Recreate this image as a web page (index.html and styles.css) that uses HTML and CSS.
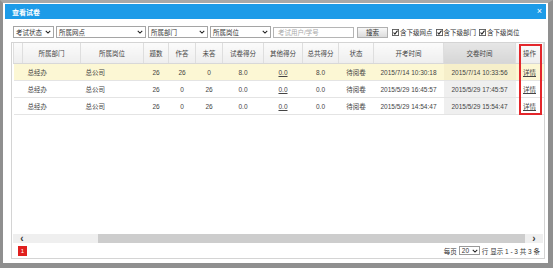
FILE: index.html
```html
<!DOCTYPE html>
<html lang="zh-CN">
<head>
    <meta charset="UTF-8">
    <title>查看试卷</title>
    <link rel="stylesheet" href="styles.css">
</head>
<body>

<div class="dialog">
    <div class="title-bar">
        <span class="title">查看试卷</span>
        <span class="close">&#215;</span>
    </div>

    <div class="content">
        <!-- filters -->
        <div class="filters">
            <div class="sel w1">考试状态<svg class="chev" viewBox="0 0 8 5"><path d="M1 1 L4 4 L7 1" /></svg></div>
            <div class="sel w2">所属网点<svg class="chev" viewBox="0 0 8 5"><path d="M1 1 L4 4 L7 1" /></svg></div>
            <div class="sel w3">所属部门<svg class="chev" viewBox="0 0 8 5"><path d="M1 1 L4 4 L7 1" /></svg></div>
            <div class="sel w4">所属岗位<svg class="chev" viewBox="0 0 8 5"><path d="M1 1 L4 4 L7 1" /></svg></div>
            <div class="search-input">考试用户/学号</div>
            <div class="search-btn">搜索</div>
            <label class="chk"><svg class="box" viewBox="0 0 8 8"><rect x="0.5" y="0.5" width="7" height="7" /><path d="M1.8 4 L3.3 5.8 L6.3 1.8" /></svg>含下级网点</label>
            <label class="chk"><svg class="box" viewBox="0 0 8 8"><rect x="0.5" y="0.5" width="7" height="7" /><path d="M1.8 4 L3.3 5.8 L6.3 1.8" /></svg>含下级部门</label>
            <label class="chk"><svg class="box" viewBox="0 0 8 8"><rect x="0.5" y="0.5" width="7" height="7" /><path d="M1.8 4 L3.3 5.8 L6.3 1.8" /></svg>含下级岗位</label>
        </div>

        <!-- grid -->
        <div class="grid">
            <div class="grid-body">
                <table>
                    <colgroup>
                        <col style="width:9px">
                        <col style="width:58px">
                        <col style="width:63px">
                        <col style="width:25px">
                        <col style="width:27px">
                        <col style="width:27px">
                        <col style="width:41px">
                        <col style="width:39px">
                        <col style="width:36px">
                        <col style="width:35px">
                        <col style="width:70px">
                        <col style="width:72px">
                        <col style="width:28px">
                    </colgroup>
                    <tr>
                        <th></th>
                        <th>所属部门</th>
                        <th>所属岗位</th>
                        <th>题数</th>
                        <th>作答</th>
                        <th>未答</th>
                        <th>试卷得分</th>
                        <th>其他得分</th>
                        <th>总共得分</th>
                        <th>状态</th>
                        <th>开考时间</th>
                        <th class="sorted">交卷时间</th>
                        <th>操作</th>
                    </tr>
                    <tr class="selected">
                        <td></td>
                        <td class="left">总经办</td>
                        <td class="left">总公司</td>
                        <td>26</td>
                        <td>26</td>
                        <td>0</td>
                        <td>8.0</td>
                        <td><u>0.0</u></td>
                        <td>8.0</td>
                        <td>待阅卷</td>
                        <td>2015/7/14 10:30:18</td>
                        <td class="sorted">2015/7/14 10:33:56</td>
                        <td><u>详情</u></td>
                    </tr>
                    <tr>
                        <td></td>
                        <td class="left">总经办</td>
                        <td class="left">总公司</td>
                        <td>26</td>
                        <td>0</td>
                        <td>26</td>
                        <td>0.0</td>
                        <td><u>0.0</u></td>
                        <td>0.0</td>
                        <td>待阅卷</td>
                        <td>2015/5/29 16:45:57</td>
                        <td class="sorted">2015/5/29 17:45:57</td>
                        <td><u>详情</u></td>
                    </tr>
                    <tr>
                        <td></td>
                        <td class="left">总经办</td>
                        <td class="left">总公司</td>
                        <td>26</td>
                        <td>0</td>
                        <td>26</td>
                        <td>0.0</td>
                        <td><u>0.0</u></td>
                        <td>0.0</td>
                        <td>待阅卷</td>
                        <td>2015/5/29 14:54:47</td>
                        <td class="sorted">2015/5/29 15:54:47</td>
                        <td><u>详情</u></td>
                    </tr>
                </table>
            </div>

            <div class="hscroll">
                <span class="arrow">&#8249;</span>
                <span class="thumb"></span>
                <span class="arrow">&#8250;</span>
            </div>

            <div class="pager">
                <span class="page-num">1</span>
                <span class="pager-info">每页 <span class="page-size">20<svg class="chev" viewBox="0 0 8 5"><path d="M1 1 L4 4 L7 1" /></svg></span> 行 显示 1 - 3 共 3 条</span>
            </div>

            <!-- highlight box around the action column -->
            <div class="mark"></div>
        </div>
    </div>
</div>

</body>
</html>
```

FILE: styles.css
```css
body {
    margin: 0;
    background-color: #fff;
    font-family: "Liberation Sans", "Noto Sans CJK SC", sans-serif;
    color: #444;
}
.dialog {
    width: 553px;
    height: 268px;
    box-sizing: border-box;
    border-style: solid;
    border-color: #8f8f8f;
    border-width: 3px 5px 5px 3px;
    border-top-color: #a8a8a8;
    padding: 1px 2px 0 2px;
    background-color: #fff;
}
.title-bar {
    height: 15px;
    background-color: #1d9be8;
    display: flex;
    align-items: center;
    justify-content: space-between;
    padding: 0 4px 0 7px;
    color: white;
}
.title {
    font-size: 7px;
    font-weight: bold;
}
.close {
    font-size: 9px;
    line-height: 9px;
}
.content {
    padding: 7px 1px 0 6px;
}
.filters {
    display: flex;
    align-items: center;
    height: 12px;
    padding-left: 2px;
    font-size: 6.5px;
}
.sel {
    height: 12px;
    box-sizing: border-box;
    border: 1px solid #a5a5a5;
    display: flex;
    align-items: center;
    justify-content: space-between;
    padding: 0 2px 0 2px;
    margin-right: 2px;
    color: #333;
}
.w1 { width: 41px; }
.w2 { width: 90px; }
.w3 { width: 60px; }
.w4 { width: 61px; }
.chev {
    width: 6px;
    height: 4px;
    fill: none;
    stroke: #222;
    stroke-width: 1.4;
}
.search-input {
    width: 81px;
    height: 11px;
    box-sizing: border-box;
    border: 1px solid #b5b5b5;
    color: #aaa;
    padding-left: 4px;
    line-height: 9px;
}
.search-btn {
    width: 31px;
    height: 11px;
    box-sizing: border-box;
    margin-left: 3px;
    border: 1px solid #b0b0b0;
    background: linear-gradient(#f8f8f8, #dcdcdc);
    text-align: center;
    line-height: 9px;
    color: #333;
}
.chk {
    display: flex;
    align-items: center;
    margin-left: 4px;
    color: #333;
}
.chk + .chk {
    margin-left: 3px;
}
.box {
    width: 7px;
    height: 7px;
    margin-right: 1px;
}
.box rect {
    fill: #fff;
    stroke: #555;
}
.box path {
    fill: none;
    stroke: #222;
    stroke-width: 1.2;
}
.grid {
    position: relative;
    margin-top: 4px;
    height: 217px;
    box-sizing: border-box;
    border: 1px solid #d4d4d4;
    padding: 0 1px;
    display: flex;
    flex-direction: column;
}
.grid-body {
    flex: 1;
}
table {
    width: 530px;
    table-layout: fixed;
    border-collapse: collapse;
    font-size: 6.5px;
}
th {
    height: 20px;
    padding: 0;
    font-weight: normal;
    color: #444;
    background: linear-gradient(#fbfbfb, #eeeeee);
    border-right: 1px solid #dedede;
    border-bottom: 1px solid #d8d8d8;
    border-left: 1px solid #dedede;
}
th.sorted {
    background: linear-gradient(#e6e6e6, #d6d6d6);
}
td {
    height: 16px;
    padding: 0;
    text-align: center;
    white-space: nowrap;
    overflow: hidden;
    border-bottom: 1px solid #e4e4e4;
}
td.left {
    text-align: left;
    padding-left: 5px;
}
td.sorted {
    background-color: #efefef;
}
tr.selected td {
    background-color: #fcf7d4;
}
tr.selected td.sorted {
    background-color: #f6efca;
}
u {
    text-decoration: underline;
}
.hscroll {
    height: 9px;
    display: flex;
    align-items: center;
    background-color: #efefef;
    font-size: 10px;
    color: #333;
    line-height: 9px;
}
.hscroll .arrow {
    width: 18px;
    text-align: center;
    font-weight: bold;
}
.hscroll .arrow:first-child {
    margin-right: 67px;
}
.thumb {
    flex: 1;
    height: 9px;
    background-color: #cdcdcd;
}
.pager {
    height: 15px;
    display: flex;
    align-items: center;
    justify-content: space-between;
    padding: 0 3px 0 5px;
    font-size: 6.5px;
}
.page-num {
    width: 9px;
    height: 10px;
    background-color: #e0201f;
    color: white;
    text-align: center;
    line-height: 10px;
    font-size: 6px;
}
.pager-info {
    display: flex;
    align-items: center;
    gap: 2px;
    color: #333;
}
.page-size {
    width: 21px;
    height: 9px;
    box-sizing: border-box;
    border: 1px solid #999;
    display: flex;
    align-items: center;
    justify-content: space-between;
    padding: 0 1px 0 2px;
}
.mark {
    position: absolute;
    left: 507px;
    top: 1px;
    width: 23px;
    height: 71px;
    box-sizing: border-box;
    border: 2px solid #e3262b;
}
```
